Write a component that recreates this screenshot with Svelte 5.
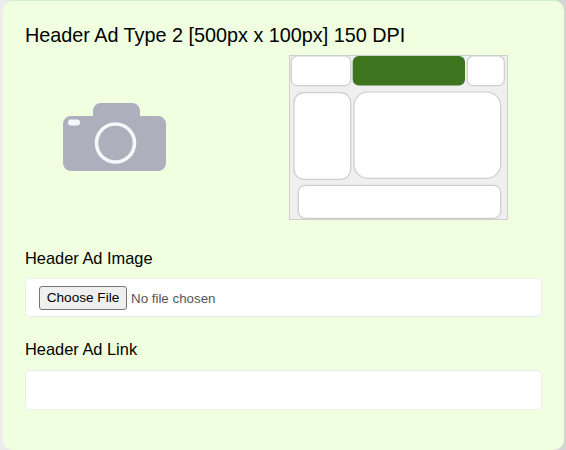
<script>
    const cells = [
        { x: 2.3, y: 1, w: 59.4, h: 29.7, r: 6, fill: '#fff' },
        { x: 63.7, y: 1, w: 112.3, h: 29.4, r: 6, fill: '#3d761f' },
        { x: 178.3, y: 1, w: 37, h: 29.7, r: 6, fill: '#fff' },
        { x: 5, y: 37.7, w: 56.7, h: 86.6, r: 10, fill: '#fff' },
        { x: 65, y: 37, w: 146.7, h: 86.3, r: 14, fill: '#fff' },
        { x: 9.3, y: 130.3, w: 202.4, h: 33, r: 7, fill: '#fff' }
    ];
</script>

<div class="card">
    <h4>Header Ad Type 2 [500px x 100px] 150 DPI</h4>

    <div class="preview">
        <div class="camera">
            <svg width="104" height="68" viewBox="0 0 104 68" aria-label="Camera">
                <path
                    fill="#adb0bc"
                    d="M30 13V8a8 8 0 0 1 8-8h31a8 8 0 0 1 8 8v5h18a8 8 0 0 1 8 8v39a8 8 0 0 1-8 8H8a8 8 0 0 1-8-8V21a8 8 0 0 1 8-8z"
                />
                <circle cx="52.5" cy="40" r="19" fill="none" stroke="#f6f7fa" stroke-width="3.6" />
                <rect x="5" y="16.5" width="12" height="6" rx="3" fill="#f6f7fa" />
            </svg>
        </div>
        <svg class="thumb" width="219" height="165" viewBox="0 0 219 165" aria-label="Ad position">
            <rect x="0.5" y="0.5" width="218" height="164" fill="#efefef" stroke="#cfcfcf" />
            {#each cells as c}
                <rect
                    x={c.x}
                    y={c.y}
                    width={c.w}
                    height={c.h}
                    rx={c.r}
                    fill={c.fill}
                    stroke={c.fill === '#fff' ? '#cdcdcd' : 'none'}
                    stroke-width="1.2"
                />
            {/each}
        </svg>
    </div>

    <div class="field">
        <label for="ad-image">Header Ad Image</label>
        <div class="control file">
            <input id="ad-image" type="file" />
        </div>
    </div>

    <div class="field">
        <label for="ad-link">Header Ad Link</label>
        <input id="ad-link" class="control" type="text" />
    </div>
</div>

<style>
    :global(body) {
        background: linear-gradient(90deg, #ececec, #d4d4d4);
    }

    .card {
        box-sizing: border-box;
        width: 561px;
        height: 450px;
        margin-left: 3px;
        padding: 24px 22px 0;
        background: #efffe0;
        border-top: 1px solid #cdf0cf;
        border-radius: 10px;
        font-family: "Liberation Sans", Arial, sans-serif;
        color: #000;
    }

    h4 {
        margin: 0;
        font-size: 19.8px;
        font-weight: 400;
        line-height: 21px;
    }

    .preview {
        display: flex;
        margin-top: 9px;
        height: 165px;
    }

    .camera {
        width: 264px;
        padding: 48px 0 0 38px;
        box-sizing: border-box;
    }

    .thumb {
        display: block;
    }

    .field {
        margin-top: 29px;
    }

    .field + .field {
        margin-top: 23px;
    }

    label {
        display: block;
        font-size: 16.4px;
        line-height: 18px;
        margin-bottom: 11px;
    }

    .field + .field label {
        margin-bottom: 12px;
    }

    .control {
        display: block;
        box-sizing: border-box;
        width: 517px;
        height: 39px;
        padding: 0 13px;
        background: #fff;
        border: 1px solid #e9ecef;
        border-radius: 5px;
        outline: none;
    }

    .file {
        display: flex;
        align-items: center;
    }

    input[type="file"] {
        font-family: "Liberation Sans", Arial, sans-serif;
        font-size: 13.33px;
        color: #555;
    }

    input[type="file"]::file-selector-button {
        box-sizing: border-box;
        width: 88px;
        height: 24px;
        margin-right: 4px;
        background: #efefef;
        border: 1px solid #767676;
        border-radius: 3px;
        font-size: 13.6px;
        color: #000;
    }

    #ad-link {
        height: 40px;
    }
</style>
